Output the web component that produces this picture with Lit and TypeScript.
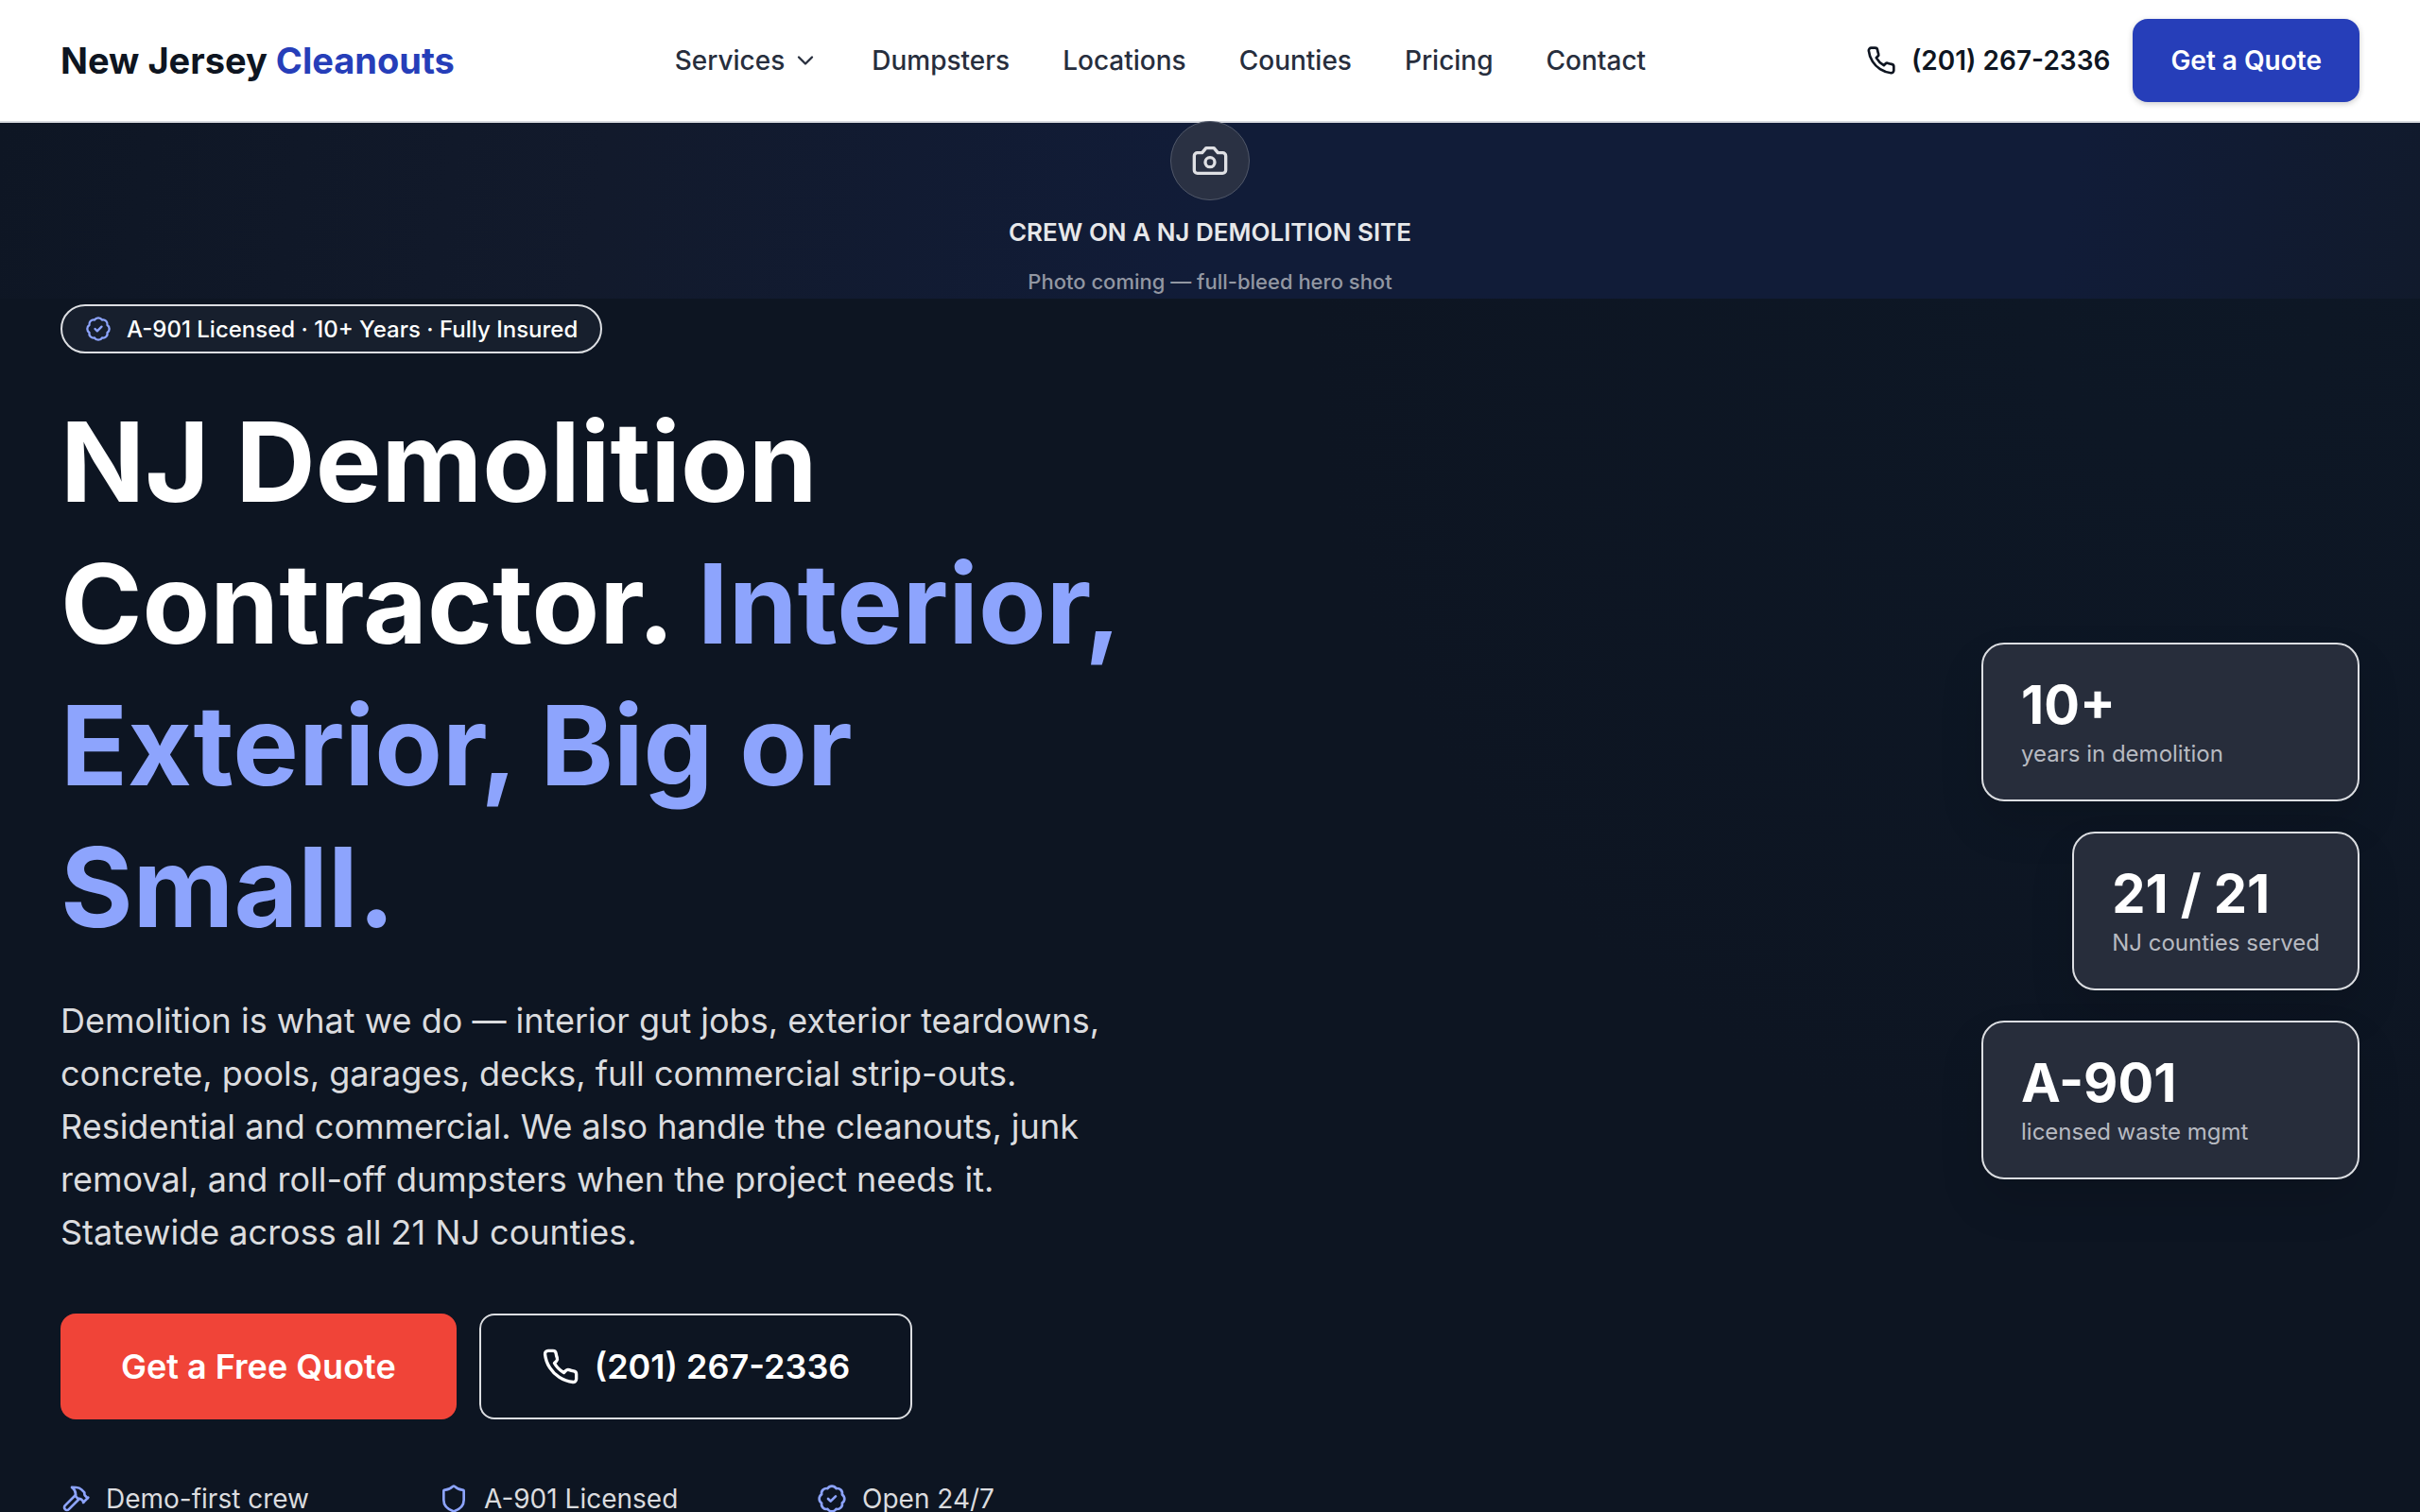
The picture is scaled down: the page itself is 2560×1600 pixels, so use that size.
import { LitElement, html, css, svg } from "lit";
import { customElement } from "lit/decorators.js";

const icons = {
  phone: svg`<path d="M22 16.92v3a2 2 0 0 1-2.18 2 19.79 19.79 0 0 1-8.63-3.07 19.5 19.5 0 0 1-6-6 19.79 19.79 0 0 1-3.07-8.67A2 2 0 0 1 4.11 2h3a2 2 0 0 1 2 1.72 12.84 12.84 0 0 0 .7 2.81 2 2 0 0 1-.45 2.11L8.09 9.91a16 16 0 0 0 6 6l1.27-1.27a2 2 0 0 1 2.11-.45 12.84 12.84 0 0 0 2.81.7A2 2 0 0 1 22 16.92z"/>`,
  chevron: svg`<path d="m6 9 6 6 6-6"/>`,
  camera: svg`<path d="M14.5 4h-5L7 7H4a2 2 0 0 0-2 2v9a2 2 0 0 0 2 2h16a2 2 0 0 0 2-2V9a2 2 0 0 0-2-2h-3l-2.500-3z"/><circle cx="12" cy="13" r="3"/>`,
  badge: svg`<path d="M3.850 8.620a4 4 0 0 1 4.780-4.770 4 4 0 0 1 6.740 0 4 4 0 0 1 4.780 4.780 4 4 0 0 1 0 6.740 4 4 0 0 1-4.770 4.780 4 4 0 0 1-6.750 0 4 4 0 0 1-4.780-4.770 4 4 0 0 1 0-6.760Z"/><path d="m9 12 2 2 4-4"/>`,
  shield: svg`<path d="M20 13c0 5-3.500 7.500-7.660 8.950a1 1 0 0 1-.67-.01C7.500 20.500 4 18 4 13V6a1 1 0 0 1 1-1c2 0 4.500-1.200 6.240-2.720a1.170 1.170 0 0 1 1.520 0C14.510 3.810 17 5 19 5a1 1 0 0 1 1 1z"/>`,
  hammer: svg`<path d="m15 12-8.373 8.373a1 1 0 1 1-3-3L12 9"/><path d="m18 15 4-4"/><path d="m21.500 11.500-1.914-1.914A2 2 0 0 1 19 8.172V7l-2.260-2.260a6 6 0 0 0-4.202-1.756L9 2.960l.92.820A6.180 6.180 0 0 1 12 8.400V10l2 2h1.172a2 2 0 0 1 1.414.586L18.500 14.500"/>`,
};

const icon = (name: keyof typeof icons, size: string) =>
  html`<svg class="icon ${size}" viewBox="0 0 24 24" aria-hidden="true">${icons[name]}</svg>`;

@customElement("app-root")
export class AppRoot extends LitElement {
  static styles = css`
    :host {
      display: block;
      min-height: 100vh;
      overflow: hidden;
      background:
        radial-gradient(circle at 90% 20%, rgb(13 25 40 / 60%), transparent 35%),
        #0d1522;
      color: #fff;
      font-family: Inter, "Liberation Sans", sans-serif;
    }
    * { box-sizing: border-box; }
    h1, p, ul, dl, dd { margin: 0; padding: 0; }
    ul { list-style: none; }
    a { color: inherit; text-decoration: none; }
    .icon {
      flex: none;
      fill: none;
      stroke: currentColor;
      stroke-width: 2;
      stroke-linecap: round;
      stroke-linejoin: round;
    }
    .medium { width: 28px; height: 28px; }
    .regular { width: 32px; height: 32px; }
    .large { width: 40px; height: 40px; }
    .header {
      display: flex;
      justify-content: space-between;
      align-items: center;
      height: 130px;
      padding: 0 64px;
      border-bottom: 2px solid #d9dbe0;
      background: #fff;
      color: #0e1521;
    }
    .logo { font-size: 38px; font-weight: 700; line-height: 48px; white-space: nowrap; }
    .logo-accent { color: #263eb9; }
    .nav { display: flex; gap: 56px; color: #272e3d; font-size: 28px; font-weight: 500; line-height: 40px; }
    .nav-button {
      display: flex;
      align-items: center;
      gap: 8px;
      padding: 0;
      border: 0;
      background: none;
      color: inherit;
      font: inherit;
    }
    .actions { display: flex; align-items: center; gap: 24px; font-size: 28px; font-weight: 600; }
    .call { display: flex; align-items: center; gap: 16px; white-space: nowrap; }
    .quote {
      padding: 24px 40px;
      border: 0;
      border-radius: 16px;
      background: #263eb9;
      box-shadow: 0 2px 6px rgb(0 0 0 / 20%);
      color: #fff;
      font: inherit;
      line-height: 40px;
    }
    .placeholder {
      display: flex;
      flex-direction: column;
      align-items: center;
      height: 186px;
      background: linear-gradient(100deg, #0e1624 0%, #121a2c 25%, #111c38 50%, #111c38 85%, #111a2c 100%);
    }
    .camera {
      display: grid;
      place-items: center;
      flex: none;
      width: 84px;
      height: 84px;
      margin-top: -2px;
      border: 1px solid #515869;
      border-radius: 50%;
      background: #2a3143;
      color: #dfe0e4;
    }
    .placeholder-title { margin-top: 14px; color: #e7e8ea; font-size: 26px; font-weight: 600; line-height: 40px; }
    .placeholder-note { margin-top: 16px; color: #9297a2; font-size: 22px; font-weight: 500; line-height: 32px; }
    .hero { display: flex; justify-content: space-between; align-items: center; padding: 6px 64px 0; }
    .copy { width: 1152px; }
    .badge {
      display: inline-flex;
      align-items: center;
      gap: 16px;
      height: 52px;
      padding: 0 24px;
      border: 2px solid #dcdee2;
      border-radius: 26px;
      background: #171f2d;
      font-size: 24px;
      font-weight: 500;
    }
    .accent, .badge .icon, .facts .icon { color: #8da4fd; }
    .title { margin-top: 40px; font-size: 117px; font-weight: 700; line-height: 150px; }
    .lead { margin-top: 38px; color: #dbdcdf; font-size: 36px; line-height: 56px; }
    .buttons { display: flex; gap: 24px; margin-top: 58px; font-size: 36px; font-weight: 600; }
    .primary, .secondary {
      display: flex;
      align-items: center;
      gap: 16px;
      height: 112px;
      padding: 0 64px;
      border: 0;
      border-radius: 16px;
      background: #f04438;
      color: #fff;
      font: inherit;
    }
    .secondary { border: 2px solid #dcdee2; background: none; }
    .facts { display: grid; grid-template-columns: repeat(3, 400px); margin-top: 64px; color: #dbdcdf; font-size: 28px; line-height: 40px; }
    .fact { display: flex; align-items: center; gap: 16px; }
    .stats { display: grid; justify-items: end; grid-template-columns: 400px; gap: 32px; }
    .stat {
      display: flex;
      flex-direction: column-reverse;
      justify-content: flex-end;
      width: 100%;
      height: 168px;
      padding: 32px 40px;
      border: 2px solid #dcdee2;
      border-radius: 24px;
      background: #272d3b;
      box-shadow: 0 24px 48px rgb(0 0 0 / 12%);
    }
    .narrow { width: auto; }
    .stat-value { font-size: 56px; font-weight: 700; line-height: 64px; }
    .stat-label { color: #b7bac1; font-size: 24px; line-height: 40px; }
  `;

  private links = ["Dumpsters", "Locations", "Counties", "Pricing", "Contact"];
  private stats = [
    { value: "10+", label: "years in demolition", width: "" },
    { value: "21 / 21", label: "NJ counties served", width: "narrow" },
    { value: "A-901", label: "licensed waste mgmt", width: "" },
  ];

  render() {
    return html`
      <header class="header">
        <a class="logo" href="#">New Jersey <span class="logo-accent">Cleanouts</span></a>
        <nav class="nav">
          <button class="nav-button">Services ${icon("chevron", "medium")}</button>
          ${this.links.map((label) => html`<a href="#">${label}</a>`)}
        </nav>
        <div class="actions">
          <a class="call" href="tel:+12012672336">${icon("phone", "regular")}(201) 267-2336</a>
          <button class="quote">Get a Quote</button>
        </div>
      </header>
      <main>
        <div class="placeholder">
          <div class="camera">${icon("camera", "large")}</div>
          <p class="placeholder-title">CREW ON A NJ DEMOLITION SITE</p>
          <p class="placeholder-note">Photo coming — full-bleed hero shot</p>
        </div>
        <section class="hero">
          <div class="copy">
            <div class="badge">${icon("badge", "medium")}A-901 Licensed · 10+ Years · Fully Insured</div>
            <h1 class="title">NJ Demolition Contractor. <span class="accent">Interior, Exterior, Big or Small.</span></h1>
            <p class="lead">
              Demolition is what we do — interior gut jobs, exterior teardowns, concrete, pools, garages, decks, full
              commercial strip-outs. Residential and commercial. We also handle the cleanouts, junk removal, and
              roll-off dumpsters when the project needs it. Statewide across all 21 NJ counties.
            </p>
            <div class="buttons">
              <button class="primary">Get a Free Quote</button>
              <a class="secondary" href="tel:+12012672336">${icon("phone", "large")}(201) 267-2336</a>
            </div>
            <ul class="facts">
              <li class="fact">${icon("hammer", "regular")}Demo-first crew</li>
              <li class="fact">${icon("shield", "regular")}A-901 Licensed</li>
              <li class="fact">${icon("badge", "regular")}Open 24/7</li>
            </ul>
          </div>
          <dl class="stats">
            ${this.stats.map(
              (stat) => html`<div class="stat ${stat.width}">
                <dt class="stat-label">${stat.label}</dt>
                <dd class="stat-value">${stat.value}</dd>
              </div>`,
            )}
          </dl>
        </section>
      </main>
    `;
  }
}
